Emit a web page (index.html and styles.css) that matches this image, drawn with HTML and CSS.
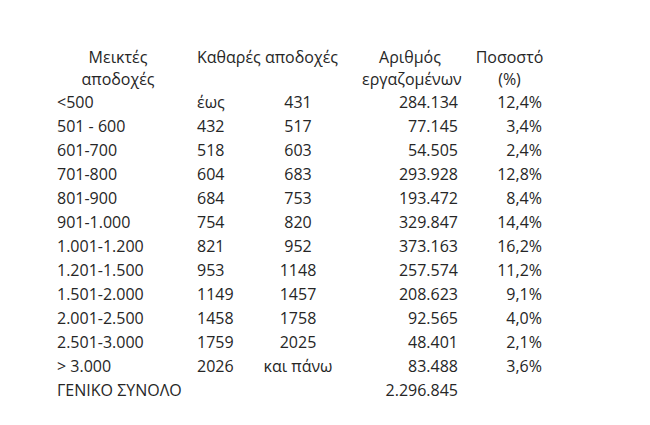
FILE: index.html
```html
<!DOCTYPE html>
<html lang="el">
<head>
<meta charset="utf-8">
<title>Αποδοχές</title>
<link rel="stylesheet" href="styles.css">
</head>
<body>
<div class="sheet">
  <div class="row head">
    <div class="c1 h">Μεικτές<br>αποδοχές</div>
    <div class="c23 h">Καθαρές αποδοχές</div>
    <div class="c4 h">Αριθμός<br>εργαζομένων</div>
    <div class="c5 h">Ποσοστό<br>(%)</div>
  </div>
  <div class="row"><div class="c1">&lt;500</div><div class="c2">έως</div><div class="c3">431</div><div class="c4">284.134</div><div class="c5">12,4%</div></div>
  <div class="row"><div class="c1">501 - 600</div><div class="c2">432</div><div class="c3">517</div><div class="c4">77.145</div><div class="c5">3,4%</div></div>
  <div class="row"><div class="c1">601-700</div><div class="c2">518</div><div class="c3">603</div><div class="c4">54.505</div><div class="c5">2,4%</div></div>
  <div class="row"><div class="c1">701-800</div><div class="c2">604</div><div class="c3">683</div><div class="c4">293.928</div><div class="c5">12,8%</div></div>
  <div class="row"><div class="c1">801-900</div><div class="c2">684</div><div class="c3">753</div><div class="c4">193.472</div><div class="c5">8,4%</div></div>
  <div class="row"><div class="c1">901-1.000</div><div class="c2">754</div><div class="c3">820</div><div class="c4">329.847</div><div class="c5">14,4%</div></div>
  <div class="row"><div class="c1">1.001-1.200</div><div class="c2">821</div><div class="c3">952</div><div class="c4">373.163</div><div class="c5">16,2%</div></div>
  <div class="row"><div class="c1">1.201-1.500</div><div class="c2">953</div><div class="c3">1148</div><div class="c4">257.574</div><div class="c5">11,2%</div></div>
  <div class="row"><div class="c1">1.501-2.000</div><div class="c2">1149</div><div class="c3">1457</div><div class="c4">208.623</div><div class="c5">9,1%</div></div>
  <div class="row"><div class="c1">2.001-2.500</div><div class="c2">1458</div><div class="c3">1758</div><div class="c4">92.565</div><div class="c5">4,0%</div></div>
  <div class="row"><div class="c1">2.501-3.000</div><div class="c2">1759</div><div class="c3">2025</div><div class="c4">48.401</div><div class="c5">2,1%</div></div>
  <div class="row"><div class="c1">&gt; 3.000</div><div class="c2">2026</div><div class="c3">και πάνω</div><div class="c4">83.488</div><div class="c5">3,6%</div></div>
  <div class="row"><div class="c1 wide">ΓΕΝΙΚΟ ΣΥΝΟΛΟ</div><div class="c4">2.296.845</div><div class="c5"></div></div>
</div>
</body>
</html>
```

FILE: styles.css
```css
html, body {
  margin: 0;
  padding: 0;
  background: #ffffff;
}
body {
  font-family: "Open Sans", "Noto Sans", sans-serif;
  font-size: 16px;
  color: #262626;
}
.sheet {
  padding: 46px 0 0 57px;
}
.row {
  display: grid;
  grid-template-columns: 140px 66px 70px 125px 87px;
  height: 24px;
  line-height: 24px;
  white-space: nowrap;
}
.row.head {
  height: 44px;
  line-height: 22px;
}
.c1 { text-align: left; }
.c1.wide { grid-column: 1 / span 3; }
.c2 { text-align: left; }
.c3 { text-align: center; }
.c23 { grid-column: 2 / span 2; text-align: left; }
.c4 { text-align: right; }
.c5 { text-align: right; padding-right: 3px; }
.c1.h { text-align: center; padding-right: 18px; }
.c4.h { text-align: center; padding-left: 29px; }
.c5.h { text-align: center; padding-left: 16px; padding-right: 0; }
```
